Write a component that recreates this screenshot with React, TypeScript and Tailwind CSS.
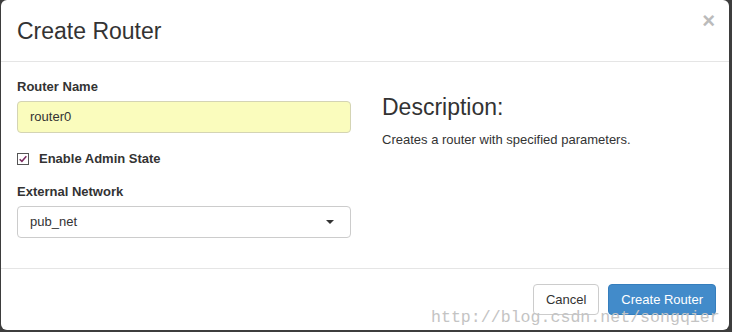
const App = () => {
  return (
    <main
      className="relative w-[732px] h-[332px] bg-[#3d3d3d] overflow-hidden text-[#333]"
      style={{ fontFamily: '"Liberation Sans", Arial, sans-serif' }}
    >
      <div className="absolute left-[1px] top-0 w-[728px] h-[330px] bg-white rounded-[6px] flex flex-col">
        {/* header */}
        <header className="h-[62px] border-b border-[#e5e5e5] flex items-center justify-between pl-4 pr-[14px] shrink-0">
          <h4 className="text-[23px] leading-none pt-[2px]">Create Router</h4>
          <span className="text-[22px] font-bold text-[#bbb] leading-none -mt-[19px]">×</span>
        </header>

        {/* body */}
        <section className="flex-1 grid grid-cols-[334px_1fr] gap-[31px] px-4 pt-[18px]">
          <div className="flex flex-col">
            <label className="text-[13px] font-bold leading-none">Router Name</label>
            <div className="mt-[8px] h-[32px] rounded-[4px] border border-[#d4d4b4] bg-[#fafcbd] flex items-center px-3 text-[13px]">
              router0
            </div>
            <div className="mt-[19px] flex items-center gap-[10px]">
              <span className="w-[12px] h-[12px] border border-[#555] bg-white flex items-center justify-center">
                <svg viewBox="0 0 12 12" className="w-[10px] h-[10px]">
                  <path d="M2 6.2 L4.7 8.8 L10 2.8" fill="none" stroke="#7a2a60" strokeWidth="1.8" />
                </svg>
              </span>
              <span className="text-[13px] font-bold leading-none">Enable Admin State</span>
            </div>
            <label className="mt-[20px] text-[13px] font-bold leading-none">External Network</label>
            <div className="mt-[8px] h-[32px] rounded-[4px] border border-[#ccc] bg-white flex items-center justify-between pl-3 pr-[16px] text-[13px]">
              <span>pub_net</span>
              <span className="w-0 h-0 border-l-[4px] border-r-[4px] border-t-[4px] border-l-transparent border-r-transparent border-t-[#333]" />
            </div>
          </div>
          <div className="flex flex-col pt-[16px]">
            <h3 className="text-[23px] leading-none">Description:</h3>
            <p className="mt-[14px] text-[13px] leading-none">Creates a router with specified parameters.</p>
          </div>
        </section>

        {/* footer */}
        <footer className="h-[62px] border-t border-[#e5e5e5] flex items-start justify-end gap-[9px] pt-[15px] pr-[13px] shrink-0">
          <button className="h-[31px] px-[12px] rounded-[4px] border border-[#ccc] bg-white text-[13px]">Cancel</button>
          <button className="h-[31px] px-[12px] rounded-[4px] border border-[#357ebd] bg-[#428bca] text-white text-[13px]">
            Create Router
          </button>
        </footer>
      </div>

      {/* watermark */}
      <span
        className="absolute left-[431px] top-[310px] text-[16.6px] text-[#c4c4c4] leading-none"
        style={{ fontFamily: '"Liberation Mono", monospace' }}
      >
        http://blog.csdn.net/songqier
      </span>
    </main>
  );
};

export default App;
